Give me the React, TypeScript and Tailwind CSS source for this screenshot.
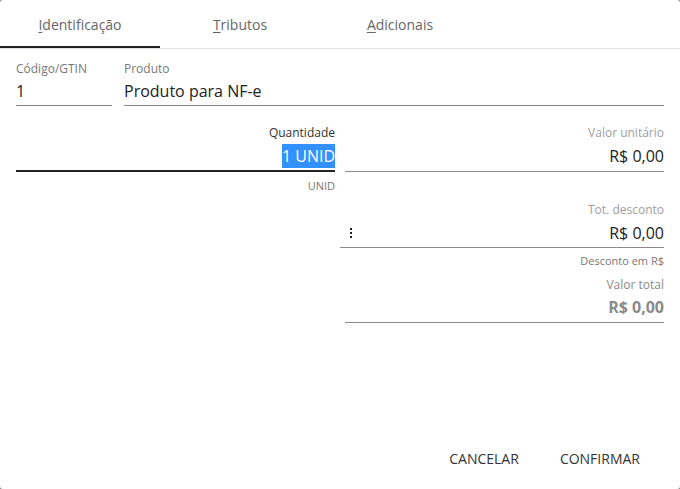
import { useState } from 'react';

const tabs = [
  { first: 'I', rest: 'dentificação' },
  { first: 'T', rest: 'ributos' },
  { first: 'A', rest: 'dicionais' },
];

function Tabs() {
  const [active, setActive] = useState(0);
  return (
    <div className="flex h-[49px] border-b border-[#e0e0e0]">
      {tabs.map((t, i) => (
        <button
          key={t.first}
          onClick={() => setActive(i)}
          className="relative w-40 h-12 text-[14px] text-[#666]"
        >
          <span className="underline underline-offset-2 decoration-1">{t.first}</span>
          {t.rest}
          {active === i && <span className="absolute left-0 right-0 bottom-0 h-[2px] bg-[#222]" />}
        </button>
      ))}
    </div>
  );
}

export default function App() {
  return (
    <div className="w-[680px] h-[489px] bg-[#8a8a8a]" style={{ fontFamily: '"Open Sans", sans-serif' }}>
      <div className="h-full bg-white rounded-[3px] flex flex-col">
        <Tabs />

        <div className="px-4">
          {/* Código / Produto */}
          <div className="flex gap-3 pt-3">
            <div className="w-24">
              <div className="text-xs leading-4 text-[#777]">Código/GTIN</div>
              <div className="pt-[2px] pb-[2px] leading-6 text-base text-[#222] border-b border-[#8a8a8a]">1</div>
            </div>
            <div className="flex-1">
              <div className="text-xs leading-4 text-[#777]">Produto</div>
              <div className="pt-[2px] pb-[2px] leading-6 text-base text-[#222] border-b border-[#8a8a8a]">Produto para NF-e</div>
            </div>
          </div>

          <div className="flex gap-[10px] mt-[19px]">
            {/* Quantidade */}
            <div className="flex-1 text-right">
              <div className="text-xs leading-4 text-[#333]">Quantidade</div>
              <div className="pt-[3px] pb-[2px] leading-6 text-base border-b-2 border-[#222]">
                <span className="bg-[#3390ff] text-white py-[1px]">1 UNID</span>
              </div>
              <div className="mt-[6px] text-[11px] leading-4 text-[#777]">UNID</div>
            </div>

            {/* Valores */}
            <div className="flex-1 text-right">
              <div className="text-xs leading-4 text-[#9e9e9e]">Valor unitário</div>
              <div className="pt-[3px] pb-[3px] leading-6 text-base text-[#222] border-b border-[#8a8a8a]">R$ 0,00</div>

              <div className="mt-[30px] text-xs leading-4 text-[#9e9e9e]">Tot. desconto</div>
              <div className="-ml-[5px] pt-[3px] pb-[2px] flex items-center justify-between border-b border-[#8a8a8a]">
                <span className="ml-[10px] flex flex-col gap-[2px]">
                  <span className="w-[2px] h-[2px] bg-[#222]" />
                  <span className="w-[2px] h-[2px] bg-[#222]" />
                  <span className="w-[2px] h-[2px] bg-[#222]" />
                </span>
                <span className="leading-6 text-base text-[#222]">R$ 0,00</span>
              </div>
              <div className="mt-[5px] text-[11px] leading-4 text-[#777]">Desconto em R$</div>

              <div className="mt-[8px] text-xs leading-4 text-[#8a8a8a]">Valor total</div>
              <div className="pt-[2px] pb-[3px] leading-6 text-base font-bold text-[#8a8a8a] border-b border-[#8a8a8a]">R$ 0,00</div>
            </div>
          </div>
        </div>

        <div className="mt-auto flex justify-end gap-[9px] pr-6 pb-3">
          <button className="h-9 px-4 text-sm text-[#333]">CANCELAR</button>
          <button className="h-9 px-4 text-sm text-[#333]">CONFIRMAR</button>
        </div>
      </div>
    </div>
  );
}
